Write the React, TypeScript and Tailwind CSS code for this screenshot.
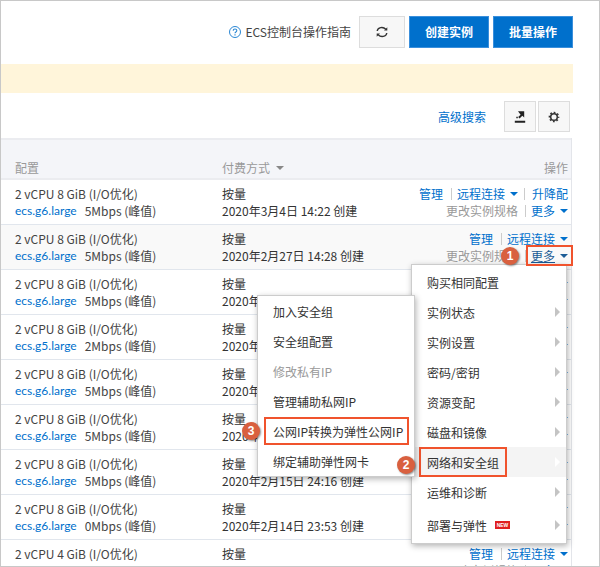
import clsx from "clsx";

const instances = [
  { cpu: "2 vCPU 8 GiB (I/O优化)", type: "ecs.g6.large", bandwidth: "5Mbps (峰值)", created: "2020年3月4日 14:22 创建", resize: true },
  { cpu: "2 vCPU 8 GiB (I/O优化)", type: "ecs.g6.large", bandwidth: "5Mbps (峰值)", created: "2020年2月27日 14:28 创建", open: true },
  { cpu: "2 vCPU 8 GiB (I/O优化)", type: "ecs.g6.large", bandwidth: "5Mbps (峰值)", created: "2020年" },
  { cpu: "2 vCPU 8 GiB (I/O优化)", type: "ecs.g5.large", bandwidth: "2Mbps (峰值)", created: "2020年" },
  { cpu: "2 vCPU 8 GiB (I/O优化)", type: "ecs.g6.large", bandwidth: "5Mbps (峰值)", created: "2020年" },
  { cpu: "2 vCPU 8 GiB (I/O优化)", type: "ecs.g6.large", bandwidth: "5Mbps (峰值)", created: "2020年" },
  { cpu: "2 vCPU 8 GiB (I/O优化)", type: "ecs.g6.large", bandwidth: "5Mbps (峰值)", created: "2020年2月15日 24:16 创建" },
  { cpu: "2 vCPU 8 GiB (I/O优化)", type: "ecs.g6.large", bandwidth: "0Mbps (峰值)", created: "2020年2月14日 23:53 创建" },
  { cpu: "2 vCPU 4 GiB (I/O优化)" },
];

const menuItems = [
  { label: "购买相同配置" },
  { label: "实例状态", sub: true },
  { label: "实例设置", sub: true },
  { label: "密码/密钥", sub: true },
  { label: "资源变配", sub: true },
  { label: "磁盘和镜像", sub: true },
  { label: "网络和安全组", sub: true, active: true },
  { label: "运维和诊断", sub: true },
  { label: "部署与弹性", sub: true, isNew: true },
];

const subItems = [
  { label: "加入安全组" },
  { label: "安全组配置" },
  { label: "修改私有IP", disabled: true },
  { label: "管理辅助私网IP" },
  { label: "公网IP转换为弹性公网IP", marked: true },
  { label: "绑定辅助弹性网卡" },
];

function Caret({ className }: { className?: string }) {
  return (
    <svg viewBox="0 0 8 4" className={clsx("h-1 w-2 shrink-0", className)} fill="currentColor">
      <path d="M0 0h8L4 4z" />
    </svg>
  );
}

function Bar({ className }: { className: string }) {
  return <span className={clsx("h-3 w-px bg-[#ccc]", className)} />;
}

function Step({ n, className }: { n: number; className: string }) {
  return (
    <span
      className={clsx(
        "absolute z-30 flex size-[18px] items-center justify-center rounded-full bg-[#d9603f] font-['Liberation_Sans',sans-serif] text-xs font-bold text-white shadow-[1px_1px_2px_rgba(0,0,0,0.45)]",
        className
      )}
    >
      {n}
    </span>
  );
}

function SubMenu() {
  return (
    <ul className="absolute right-full bottom-0 z-20 -mr-[3px] w-[158px] border border-[#ccc] bg-white shadow-[1px_2px_6px_rgba(0,0,0,0.3)]">
      {subItems.map((item) => (
        <li key={item.label} className="relative flex h-[30px] items-center pl-1.5">
          <button
            disabled={item.disabled}
            className={clsx(
              "h-7 border-2 pr-1 pl-[7px] whitespace-nowrap",
              item.marked ? "border-[#f0532d]" : "border-transparent",
              item.disabled && "text-[#999]"
            )}
          >
            {item.label}
          </button>
          {item.marked && <Step n={3} className="top-1.5 -left-4" />}
        </li>
      ))}
    </ul>
  );
}

function MoreMenu() {
  return (
    <ul className="absolute top-full right-px z-10 w-[156px] border border-[#ccc] bg-white pt-0.5 text-[#333] shadow-[1px_2px_6px_rgba(0,0,0,0.3)]">
      {menuItems.map((item) => (
        <li
          key={item.label}
          className={clsx(
            "relative flex items-center pr-1.5 pl-[7px]",
            item.isNew ? "h-9" : "h-[30px]",
            item.active && "bg-[#f4f4f4]"
          )}
        >
          <button
            className={clsx(
              "h-[30px] border-2 px-1.5 whitespace-nowrap",
              item.active ? "border-[#f0532d]" : "border-transparent"
            )}
          >
            {item.label}
          </button>
          {item.isNew && (
            <span className="flex h-2 w-[15px] items-center justify-center bg-[#e02020] font-['Liberation_Sans',sans-serif] text-[5px] font-bold text-white">
              NEW
            </span>
          )}
          {item.sub && (
            <svg
              viewBox="0 0 5 10"
              className={clsx("ml-auto h-2.5 w-[5px]", item.active ? "text-white" : "text-[#c4c4c4]")}
              fill="currentColor"
            >
              <path d="M0 0l5 5-5 5z" />
            </svg>
          )}
          {item.active && <SubMenu />}
          {item.active && <Step n={2} className="top-[9px] -left-[15px]" />}
        </li>
      ))}
    </ul>
  );
}

function Actions({ resize, open }: { resize?: boolean; open?: boolean }) {
  return (
    <div className="relative text-[#0070cc]">
      <div className="flex h-[17px] items-center justify-end">
        <a href="#">管理</a>
        <Bar className="mr-[5px] ml-2" />
        <button className="flex items-center">
          远程连接
          <Caret className="ml-[5px]" />
        </button>
        {resize && <Bar className="mr-[7px] ml-1.5" />}
        {resize && <a href="#">升降配</a>}
      </div>
      <div className="flex h-[17px] items-center justify-end">
        <span className="text-[#999]">更改实例规格</span>
        <Bar className="mr-[5px] ml-[7px]" />
        <button className={clsx("relative flex items-center", open && "text-[#1c5c96]")}>
          <span className={clsx(open && "underline")}>更多</span>
          <Caret className="ml-[5px]" />
          {open && <span className="absolute -inset-x-[5px] -inset-y-0.5 z-20 border-2 border-[#f0532d]" />}
          {open && <Step n={1} className="right-full mr-3" />}
        </button>
      </div>
      {open && <MoreMenu />}
    </div>
  );
}

export default function App() {
  return (
    <div className="h-screen overflow-hidden border border-[#c8c8c8] bg-white font-['Noto_Sans_CJK_SC',sans-serif] text-xs text-[#444]">
      <div className="flex items-center justify-end gap-1 pt-[15px] pr-[26px]">
        <a href="#" className="mr-1 flex items-center gap-1">
          <svg viewBox="0 0 12 12" className="size-3" fill="none" stroke="#2b87d3">
            <circle cx="6" cy="6" r="5.5" />
            <path d="M4.2 4.8c0-2.5 3.6-2.4 3.6-.2C7.8 6 6 5.900 6 7.300M6 8.300v1.200" strokeWidth="1.100" />
          </svg>
          ECS控制台操作指南
        </a>
        <button aria-label="刷新" className="flex h-8 w-[46px] items-center justify-center border border-[#ddd] bg-[#f7f7f7]">
          <svg viewBox="0 0 12 12" className="size-3 text-[#333]" fill="none" stroke="currentColor" strokeWidth="1.400">
            <path d="M1.200 5C1.800 1.200 7 .3 9.800 3.200M10.800 7C10.200 10.800 5 11.700 2.200 8.800" />
            <path d="M11.300 1.200v3.300H8zM.7 10.800V7.500H4z" fill="currentColor" stroke="none" />
          </svg>
        </button>
        <button className="h-8 w-20 border border-[#3a8fdc] bg-[#0070cc] font-bold text-white">创建实例</button>
        <button className="h-8 w-20 border border-[#3a8fdc] bg-[#0070cc] font-bold text-white">批量操作</button>
      </div>

      <div className="mt-4 mr-[26px] h-[29px] bg-[#fff5da]" />

      <div className="flex items-center justify-end gap-0.5 pt-2 pr-[29px] pb-1.5">
        <a href="#" className="mr-4 text-[#0070cc]">高级搜索</a>
        <button aria-label="导出" className="flex h-[31px] w-8 items-center justify-center border border-[#ddd] bg-[#f7f7f7]">
          <svg viewBox="0 0 12 12" className="size-3 text-[#222]" fill="currentColor">
            <path d="M.8 9.800h10.400v1.900H.8zM4 .2h6.200v6.300L8.300 4.700 5.600 7.400 4.200 6l2.400-2.300zM2.300 5.800h1.500v1.500H2.300z" />
          </svg>
        </button>
        <button aria-label="设置" className="flex h-[31px] w-8 items-center justify-center border border-[#ddd] bg-[#f7f7f7]">
          <svg viewBox="0 0 12 12" className="size-3 text-[#333]" fill="none" stroke="currentColor">
            <circle cx="6" cy="6" r="3.300" strokeWidth="1.500" />
            <circle cx="6" cy="6" r="4.600" strokeWidth="1.500" strokeDasharray="1.800 1.813" strokeDashoffset=".9" />
          </svg>
        </button>
      </div>

      <div className="mr-[27px] border-r border-[#e3e5ea]">
        <table className="w-full border-separate border-spacing-0 text-left leading-[17px]">
          <thead className="bg-[#f4f5f9] text-[#999]">
            <tr>
              <th className="h-[42px] w-[221px] border-t-2 border-b-2 border-[#ebecf0] pb-0.5 pl-3.5 align-bottom font-normal">配置</th>
              <th className="border-t-2 border-b-2 border-[#ebecf0] pb-0.5 align-bottom font-normal">
                <button className="flex items-center">
                  付费方式
                  <Caret className="ml-1.5 text-[#888]" />
                </button>
              </th>
              <th className="border-t-2 border-b-2 border-[#ebecf0] pr-[3px] pb-0.5 text-right align-bottom font-normal">操作</th>
            </tr>
          </thead>
          <tbody>
            {instances.map((row, i) => (
              <tr key={i} className={clsx("align-top whitespace-nowrap", row.open && "bg-[#f9f9f9]")}>
                <td className="border-b border-[#e1e6ed] py-[5px] pl-3.5">
                  <div>{row.cpu}</div>
                  {row.type && (
                    <div className="flex h-[17px] items-center gap-2">
                      <a href="#" className="font-[Lato,sans-serif] text-[#0070cc]">{row.type}</a>
                      <span>{row.bandwidth}</span>
                    </div>
                  )}
                </td>
                <td className="border-b border-[#e1e6ed] py-[5px] text-[#333]">
                  <div>按量</div>
                  {row.created && <div>{row.created}</div>}
                </td>
                <td className="border-b border-[#e1e6ed] py-[5px] pr-[3px]">
                  <Actions resize={row.resize} open={row.open} />
                </td>
              </tr>
            ))}
          </tbody>
        </table>
      </div>
    </div>
  );
}
